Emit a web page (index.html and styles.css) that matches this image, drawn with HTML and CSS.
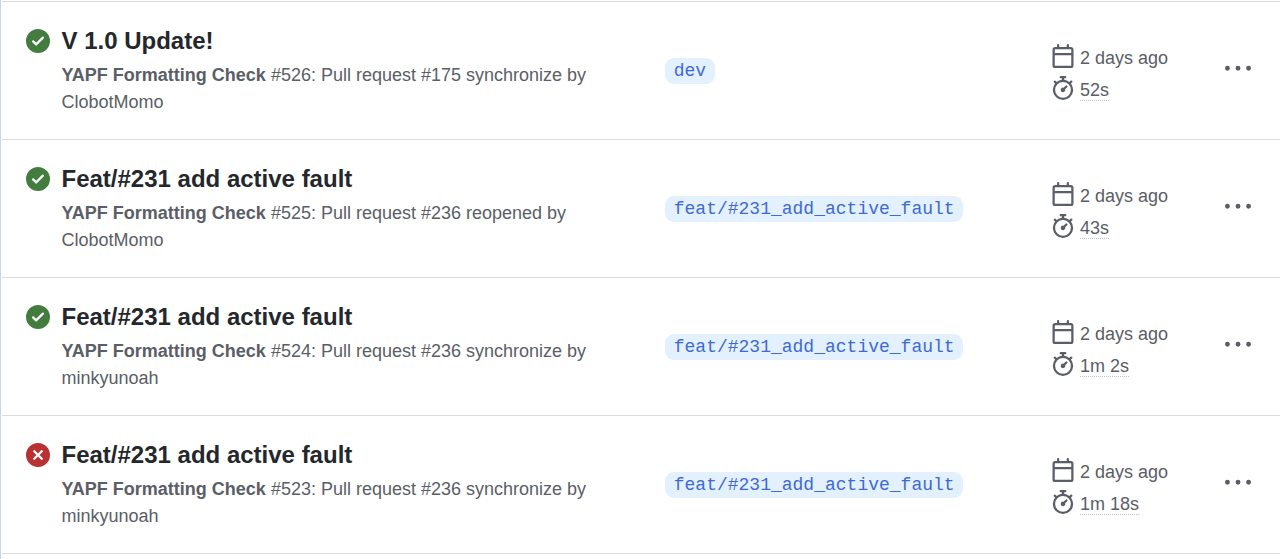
FILE: index.html
```html
<!DOCTYPE html>
<html lang="en">
<head>
    <meta charset="UTF-8">
    <title>Workflow runs</title>
    <link rel="stylesheet" href="styles.css">
</head>
<body>
    <svg class="sprite" width="0" height="0">
        <symbol id="calendar" viewBox="0 0 16 16">
            <path d="M4.75 0a.75.75 0 0 1 .75.75V2h5V.75a.75.75 0 0 1 1.5 0V2h1.25c.966 0 1.75.784 1.75 1.75v10.5A1.75 1.75 0 0 1 13.25 16H2.75A1.75 1.75 0 0 1 1 14.25V3.75C1 2.784 1.784 2 2.75 2H4V.75A.75.75 0 0 1 4.75 0ZM2.5 7.5v6.75c0 .138.112.25.25.25h10.5a.25.25 0 0 0 .25-.25V7.5Zm10.75-4H2.75a.25.25 0 0 0-.25.25V6h11V3.75a.25.25 0 0 0-.25-.25Z"/>
        </symbol>
        <symbol id="stopwatch" viewBox="0 0 16 16">
            <path d="M5.75.75A.75.75 0 0 1 6.5 0h3a.75.75 0 0 1 0 1.5h-.75v1l-.001.041a6.724 6.724 0 0 1 3.464 1.435l.007-.006.75-.75a.749.749 0 0 1 1.06 1.06l-.75.75-.006.007a6.75 6.75 0 1 1-10.548 0L2.72 5.03l-.75-.75a.751.751 0 0 1 1.06-1.06l.75.75.007.006A6.72 6.72 0 0 1 7.25 2.541V1.5H6.5a.75.75 0 0 1-.75-.75ZM8 14.5a5.25 5.25 0 1 0-.001-10.501A5.25 5.25 0 0 0 8 14.5Zm.389-6.7 1.33-1.33a.75.75 0 1 1 1.061 1.06L9.45 8.861A1.503 1.503 0 0 1 8 10.75a1.499 1.499 0 1 1 .389-2.95Z"/>
        </symbol>
        <symbol id="success" viewBox="0 0 16 16">
            <path d="M8 16A8 8 0 1 1 8 0a8 8 0 0 1 0 16Zm3.78-9.72a.751.751 0 0 0-.018-1.042.751.751 0 0 0-1.042-.018L6.75 9.19 5.28 7.72a.751.751 0 0 0-1.042.018.751.751 0 0 0-.018 1.042l2 2a.75.75 0 0 0 1.06 0Z"/>
        </symbol>
        <symbol id="failure" viewBox="0 0 16 16">
            <path d="M2.343 13.657A8 8 0 1 1 13.658 2.343 8 8 0 0 1 2.343 13.657ZM6.03 4.97a.751.751 0 0 0-1.042.018.751.751 0 0 0-.018 1.042L6.94 8 4.97 9.97a.749.749 0 0 0 .326 1.275.749.749 0 0 0 .734-.215L8 9.06l1.97 1.97a.749.749 0 0 0 1.275-.326.749.749 0 0 0-.215-.734L9.06 8l1.97-1.97a.749.749 0 0 0-.326-1.275.749.749 0 0 0-.734.215L8 6.94Z"/>
        </symbol>
        <symbol id="kebab" viewBox="0 0 16 16">
            <path d="M8 9a1.5 1.5 0 1 0 0-3 1.5 1.5 0 0 0 0 3ZM1.5 9a1.5 1.5 0 1 0 0-3 1.5 1.5 0 0 0 0 3Zm13 0a1.5 1.5 0 1 0 0-3 1.5 1.5 0 0 0 0 3Z"/>
        </symbol>
    </svg>

    <div class="run-list">
        <div class="run">
            <svg class="status ok"><use href="#success"/></svg>
            <div class="info">
                <h3>V 1.0 Update!</h3>
                <p><b>YAPF Formatting Check</b> <span>#526: Pull request #175 synchronize by</span> <span>ClobotMomo</span></p>
            </div>
            <div class="branch-col"><a class="branch">dev</a></div>
            <div class="meta">
                <div class="meta-row"><svg class="meta-icon"><use href="#calendar"/></svg><span>2 days ago</span></div>
                <div class="meta-row"><svg class="meta-icon"><use href="#stopwatch"/></svg><span class="dotted">52s</span></div>
            </div>
            <svg class="more"><use href="#kebab"/></svg>
        </div>

        <div class="run">
            <svg class="status ok"><use href="#success"/></svg>
            <div class="info">
                <h3>Feat/#231 add active fault</h3>
                <p><b>YAPF Formatting Check</b> <span>#525: Pull request #236 reopened by</span> <span>ClobotMomo</span></p>
            </div>
            <div class="branch-col"><a class="branch">feat/#231_add_active_fault</a></div>
            <div class="meta">
                <div class="meta-row"><svg class="meta-icon"><use href="#calendar"/></svg><span>2 days ago</span></div>
                <div class="meta-row"><svg class="meta-icon"><use href="#stopwatch"/></svg><span class="dotted">43s</span></div>
            </div>
            <svg class="more"><use href="#kebab"/></svg>
        </div>

        <div class="run">
            <svg class="status ok"><use href="#success"/></svg>
            <div class="info">
                <h3>Feat/#231 add active fault</h3>
                <p><b>YAPF Formatting Check</b> <span>#524: Pull request #236 synchronize by</span> <span>minkyunoah</span></p>
            </div>
            <div class="branch-col"><a class="branch">feat/#231_add_active_fault</a></div>
            <div class="meta">
                <div class="meta-row"><svg class="meta-icon"><use href="#calendar"/></svg><span>2 days ago</span></div>
                <div class="meta-row"><svg class="meta-icon"><use href="#stopwatch"/></svg><span class="dotted">1m 2s</span></div>
            </div>
            <svg class="more"><use href="#kebab"/></svg>
        </div>

        <div class="run">
            <svg class="status fail"><use href="#failure"/></svg>
            <div class="info">
                <h3>Feat/#231 add active fault</h3>
                <p><b>YAPF Formatting Check</b> <span>#523: Pull request #236 synchronize by</span> <span>minkyunoah</span></p>
            </div>
            <div class="branch-col"><a class="branch">feat/#231_add_active_fault</a></div>
            <div class="meta">
                <div class="meta-row"><svg class="meta-icon"><use href="#calendar"/></svg><span>2 days ago</span></div>
                <div class="meta-row"><svg class="meta-icon"><use href="#stopwatch"/></svg><span class="dotted">1m 18s</span></div>
            </div>
            <svg class="more"><use href="#kebab"/></svg>
        </div>
    </div>
</body>
</html>
```

FILE: styles.css
```css
html, body {
    height: 100%;
}

body {
    font-family: "Liberation Sans", Arial, sans-serif;
    background-color: #fff;
    color: #24272b;
    margin: 0;
    padding: 0;
    overflow: hidden;
}

.sprite {
    display: block;
}

.run-list {
    border-left: 1px solid #ccd5e3;
    padding-left: 1px;
    padding-top: 1px;
    min-height: 100%;
    box-sizing: border-box;
}

.run {
    display: flex;
    align-items: flex-start;
    height: 138px;
    box-sizing: border-box;
    padding: 26px 0 0 24px;
    border-bottom: 1px solid #dcdcdc;
}

.run:first-child {
    height: 139px;
    border-top: 1px solid #dcdcdc;
}

.status {
    width: 24px;
    height: 24px;
    margin-top: 1px;
    flex-shrink: 0;
}

.status.ok {
    fill: #437c3f;
}

.status.fail {
    fill: #b83232;
}

.info {
    width: 603.5px;
    box-sizing: border-box;
    padding-right: 60px;
    margin-left: 11.5px;
    flex-shrink: 0;
}

h3 {
    margin: 0;
    font-size: 24px;
    line-height: 26px;
    font-weight: bold;
    color: #24272b;
}

.info p {
    margin: 8px 0 0;
    font-size: 18px;
    line-height: 27px;
    color: #5a5e66;
}

.branch-col {
    width: 60px;
    flex-grow: 1;
    padding-top: 30px;
}

.branch {
    display: inline-block;
    font-family: "Liberation Mono", monospace;
    font-size: 18px;
    line-height: 26px;
    padding: 0 8.75px;
    border-radius: 9px;
    background-color: #e3f1ff;
    color: #4169d0;
}

.meta {
    width: 174px;
    padding-top: 14px;
    flex-shrink: 0;
    font-size: 18px;
    color: #5a5e66;
}

.meta-row {
    display: flex;
    align-items: center;
    height: 32px;
}

.meta-icon {
    width: 24px;
    height: 24px;
    margin: 0 5px 4px 0;
    fill: #5a5e66;
}

.dotted {
    padding-top: 1px;
    border-bottom: 1px dotted #c0c4ca;
    line-height: 20px;
}

.more {
    width: 26px;
    height: 26px;
    margin: 28px 29px 0 0;
    fill: #5a5e66;
}
```
